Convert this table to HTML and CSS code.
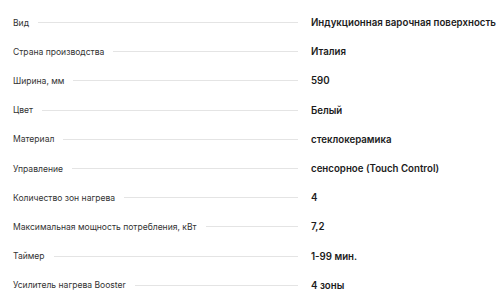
FILE: index.html
```html
<!DOCTYPE html>
<html lang="ru">
<head>
  <meta charset="UTF-8" />
  <meta name="viewport" content="width=device-width, initial-scale=1.0"/>
  <title>Характеристики</title>
  <link rel="stylesheet" href="styles.css">
</head>
<body>

  <dl class="specs">
    <div class="spec-row"><dt><span>Вид</span></dt><dd>Индукционная варочная поверхность</dd></div>
    <div class="spec-row"><dt><span>Страна производства</span></dt><dd>Италия</dd></div>
    <div class="spec-row"><dt><span>Ширина, мм</span></dt><dd>590</dd></div>
    <div class="spec-row"><dt><span>Цвет</span></dt><dd>Белый</dd></div>
    <div class="spec-row"><dt><span>Материал</span></dt><dd>стеклокерамика</dd></div>
    <div class="spec-row"><dt><span>Управление</span></dt><dd>сенсорное (Touch Control)</dd></div>
    <div class="spec-row"><dt><span>Количество зон нагрева</span></dt><dd>4</dd></div>
    <div class="spec-row"><dt><span>Максимальная мощность потребления, кВт</span></dt><dd>7,2</dd></div>
    <div class="spec-row"><dt><span>Таймер</span></dt><dd>1-99 мин.</dd></div>
    <div class="spec-row"><dt><span>Усилитель нагрева Booster</span></dt><dd>4 зоны</dd></div>
  </dl>

</body>
</html>
```

FILE: styles.css
```css
body {
  font-family: Inter, 'Noto Sans', sans-serif;
  margin: 0;
  padding: 0;
  background: #fff;
  color: #222;
}

.specs {
  margin: 0;
  padding: 8px 0 0 13px;
}

.spec-row {
  display: grid;
  grid-template-columns: 285px 1fr;
  column-gap: 13px;
  align-items: center;
  height: 29.2px;
}

.spec-row dt {
  display: flex;
  align-items: center;
  gap: 9px;
  font-size: 8.55px;
  color: #333;
}

/* thin rule filling the space between name and value */
.spec-row dt::after {
  content: "";
  flex: 1;
  height: 1px;
  background: #e4e4e4;
}

.spec-row dd {
  margin: 0;
  font-size: 9.7px;
  font-weight: 600;
  color: #1c1c1c;
  white-space: nowrap;
}
```
